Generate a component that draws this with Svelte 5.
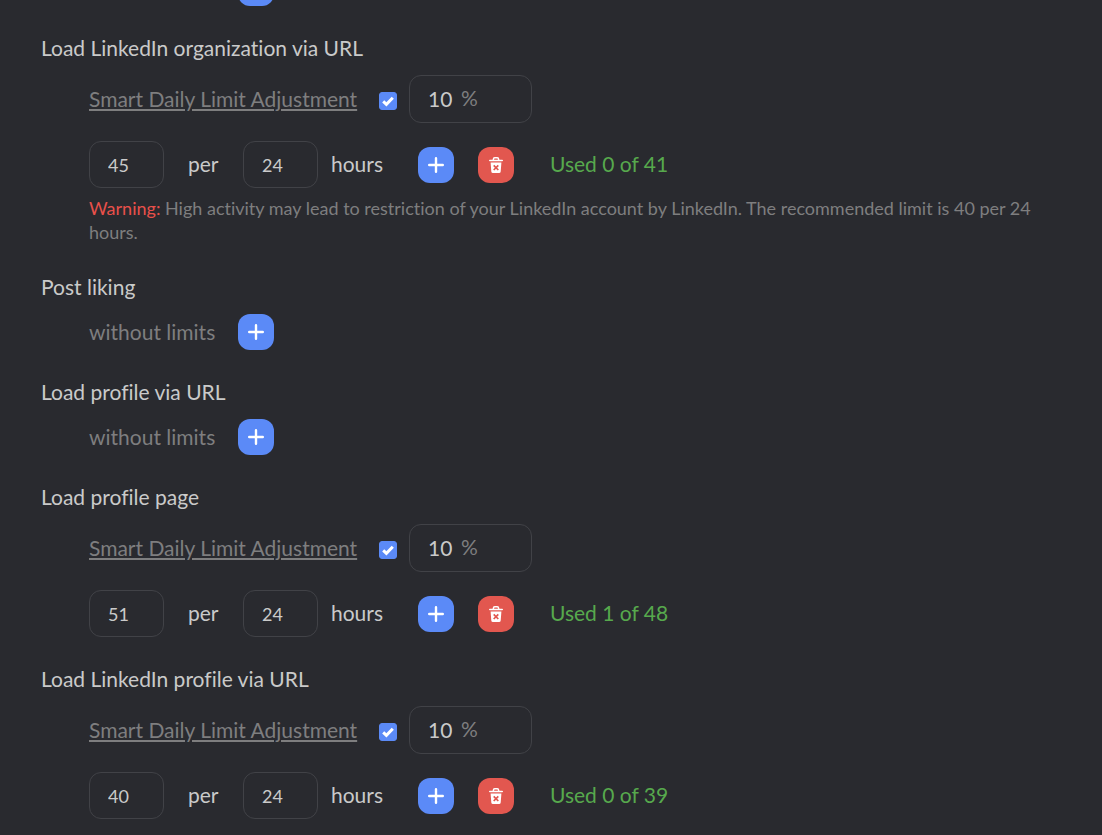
<script>
  let groups = $state([
    {
      id: "organization",
      title: "Load LinkedIn organization via URL",
      smart: true,
      percent: 10,
      limit: 45,
      hours: 24,
      used: 0,
      allowed: 41,
      recommended: 40,
    },
    { id: "liking", title: "Post liking" },
    { id: "profile-url", title: "Load profile via URL" },
    {
      id: "profile-page",
      title: "Load profile page",
      smart: true,
      percent: 10,
      limit: 51,
      hours: 24,
      used: 1,
      allowed: 48,
    },
    {
      id: "linkedin-profile",
      title: "Load LinkedIn profile via URL",
      smart: true,
      percent: 10,
      limit: 40,
      hours: 24,
      used: 0,
      allowed: 39,
    },
  ]);

  function addLimit(group) {
    if (group.limit) return;
    Object.assign(group, { smart: true, percent: 10, limit: 40, hours: 24, used: 0, allowed: 40 });
  }

  function removeLimit(group) {
    group.limit = undefined;
  }
</script>

{#snippet addButton(group)}
  <button class="btn add" type="button" aria-label="Add limit" onclick={() => group && addLimit(group)}>
    <svg width="16" height="16" viewBox="0 0 16 16" aria-hidden="true">
      <path d="M8 1.2v13.6M1.2 8h13.6" fill="none" stroke="#fff" stroke-width="2.4" stroke-linecap="round" />
    </svg>
  </button>
{/snippet}

<main class="limits">
  <div class="unlimited previous">
    {@render addButton()}
  </div>

  {#each groups as group (group.id)}
    <section class="group">
      <h2>{group.title}</h2>

      {#if group.limit}
        <div class="smart">
          <label class="smart-label" for="{group.id}-smart">Smart Daily Limit Adjustment</label>
          <input class="check" type="checkbox" id="{group.id}-smart" bind:checked={group.smart} />
          <label class="percent">
            <input type="text" aria-label="Adjustment percent" bind:value={group.percent} />
            <span>%</span>
          </label>
        </div>

        <div class="limit">
          <input class="number" type="text" aria-label="Limit" bind:value={group.limit} />
          <label class="per" for="{group.id}-hours">per</label>
          <input class="number" type="text" id="{group.id}-hours" bind:value={group.hours} />
          <span class="hours">hours</span>
          <div class="actions">
            {@render addButton(group)}
            <button class="btn remove" type="button" aria-label="Remove limit" onclick={() => removeLimit(group)}>
              <svg width="16" height="18" viewBox="0 0 16 18" aria-hidden="true">
                <path d="M5.4 4V3.2Q5.4 1.8 6.8 1.8H9.2Q10.6 1.8 10.6 3.2V4" fill="none" stroke="#fff" stroke-width="1.5" />
                <path d="M1.8 4.5H14.2" stroke="#fff" stroke-width="1.6" stroke-linecap="round" />
                <path d="M2.6 6.6H13.4L12.7 15.4Q12.6 17 11 17H5Q3.4 17 3.3 15.4Z" fill="#fff" />
                <path d="M5.7 9.3L10.3 14M10.3 9.3L5.7 14" stroke="#e2574f" stroke-width="1.7" />
              </svg>
            </button>
          </div>
          <span class="used">Used {group.used} of {group.allowed}</span>
        </div>

        {#if group.recommended}
          <p class="warning">
            <strong>Warning:</strong> High activity may lead to restriction of your LinkedIn account by LinkedIn. The
            recommended limit is {group.recommended} per 24 hours.
          </p>
        {/if}
      {:else}
        <div class="unlimited">
          <span>without limits</span>
          {@render addButton(group)}
        </div>
      {/if}
    </section>
  {/each}
</main>

<style>
  :global(body) {
    background: #292a2f;
  }

  .limits {
    box-sizing: border-box;
    padding: 0 41px 16px;
    overflow: hidden;
    color: #cacaca;
    font-family: Lato, "Open Sans", sans-serif;
    font-size: 21px;
    font-variant-ligatures: none;
    line-height: 28px;
  }

  .group {
    margin-top: 28px;
  }

  h2 {
    margin: 0 0 13px;
    font-size: 21px;
    font-weight: 400;
  }

  input {
    box-sizing: border-box;
    margin: 0;
    color: inherit;
    font-family: inherit;
    outline: none;
  }

  .smart,
  .limit,
  .unlimited,
  .warning {
    margin-left: 48px;
  }

  .smart {
    display: flex;
    align-items: center;
    margin-bottom: 18px;
  }

  .smart-label {
    min-width: 275px;
    color: #7e7e7f;
    text-decoration: underline;
    text-decoration-thickness: 2px;
    text-underline-offset: 2px;
  }

  .check {
    appearance: none;
    width: 18px;
    height: 18px;
    margin: 4px 12px 0 15px;
    border-radius: 3px;
    border: 1px solid #5b8af7;
  }

  .check:checked {
    background: #5b8af7
      url("data:image/svg+xml,<svg xmlns='http://www.w3.org/2000/svg' viewBox='0 0 16 16'><path d='M3.2 8.4L6.4 11.4L12.8 4.8' fill='none' stroke='white' stroke-width='3'/></svg>");
  }

  .percent {
    box-sizing: border-box;
    display: flex;
    align-items: center;
    width: 123px;
    height: 48px;
    padding: 0 18px 2px;
    border: 1px solid #414247;
    border-radius: 12px;
  }

  .percent input {
    width: 33px;
    padding: 0;
    border: 0;
    background: none;
    font-size: 21px;
  }

  .percent span {
    color: #7e7e7f;
  }

  .limit {
    display: flex;
    align-items: flex-start;
  }

  .limit > label,
  .limit > span {
    line-height: 45px;
  }

  .number {
    width: 75px;
    height: 47px;
    padding: 0 18px;
    border: 1px solid #414247;
    border-radius: 12px;
    background: none;
    font-size: 18px;
  }

  .per {
    width: 55px;
    margin-left: 24px;
  }

  .hours {
    width: 87px;
    margin-left: 13px;
  }

  .actions {
    display: flex;
    gap: 24px;
    margin-right: 36px;
    padding-top: 6px;
  }

  .btn {
    display: flex;
    align-items: center;
    justify-content: center;
    width: 36px;
    height: 36px;
    padding: 0;
    border: 0;
    border-radius: 12px;
    cursor: pointer;
  }

  .add {
    background: #5b8af7;
  }

  .remove {
    background: #e2574f;
  }

  .used {
    color: #57a94d;
  }

  .warning {
    margin-top: 8px;
    margin-bottom: 29px;
    color: #7e7e7f;
    font-size: 18px;
    line-height: 24px;
  }

  .warning strong {
    color: #e8504a;
    font-weight: 400;
  }

  .unlimited {
    display: flex;
    align-items: center;
    color: #7e7e7f;
  }

  .unlimited span {
    width: 149px;
  }

  .previous {
    margin-top: -30px;
    padding-left: 149px;
  }
</style>
